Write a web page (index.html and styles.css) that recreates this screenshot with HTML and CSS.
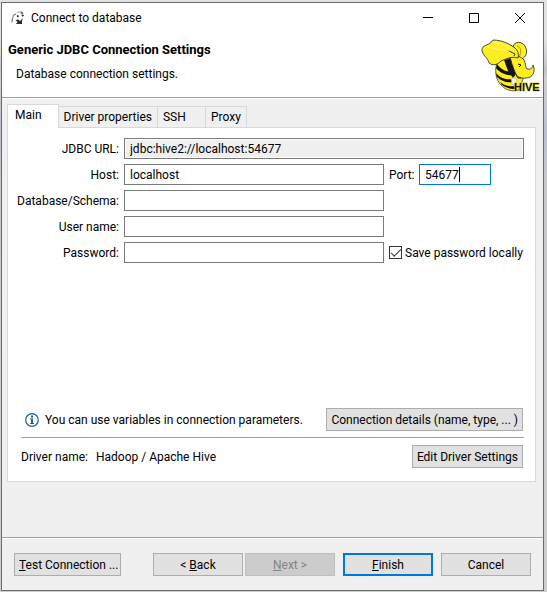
FILE: index.html
```html
<!DOCTYPE html>
<html lang="en">
<head>
<meta charset="utf-8">
<title>Connect to database</title>
<link rel="stylesheet" href="styles.css">
</head>
<body>
<main class="window">
  <div class="titlebar">
    <svg class="app-icon" width="16" height="16" viewBox="0 0 16 16" aria-hidden="true">
      <path d="M2 12.500C2 9 3 6.500 4 5M3.500 5L6 4" fill="none" stroke="#6f625e"/>
      <path d="M7 2.500L9 2L12 1.500" fill="none" stroke="#b0a5a1"/>
      <path d="M10.500 2.500L12.500 2L13.500 3.500L12 4L10.500 3.500Z" fill="#6a5a55"/>
      <path d="M5.500 10L8 9.500L10 11L13 8L12 11L12 14H6L7.500 12Z" fill="#382a28"/>
      <path d="M7 6.500L8.500 6M12 5L13.500 6" stroke="#382a28" stroke-width="2"/>
    </svg>
    <span class="caption">Connect to database</span>
    <button class="winbtn" aria-label="Minimize"><svg width="10" height="10"><path d="M0 4.500H10" stroke="#000"/></svg></button>
    <button class="winbtn" aria-label="Maximize"><svg width="10" height="10"><path d="M.5 .5H9.500V9.500H.5Z" fill="none" stroke="#000"/></svg></button>
    <button class="winbtn" aria-label="Close"><svg width="10" height="10"><path d="M0 0L10 10M10 0L0 10" stroke="#000"/></svg></button>
  </div>
  <header class="header">
    <div>
      <h1>Generic JDBC Connection Settings</h1>
      <p>Database connection settings.</p>
    </div>
    <svg class="logo" width="60" height="56" viewBox="0 0 60 56" role="img" aria-label="Hive">
      <path d="M17 22C13 29 14 41 21 47C25 51 31 53 38 51L42 40L29 19Z" fill="#fdee21" stroke="#222" stroke-width=".7"/>
      <path d="M16 25C20 31 26 33 32 33L33 36C26 37 19 34 15 29ZM15 34C20 40 26 41 32 40L31 43C26 44 20 42 16 38ZM19 43C24 47 29 48 34 47L34 50C28 50 24 48 21 46Z" fill="#111"/>
      <path d="M23 21L33 19L32 27L35 35L32 39L27 32Z" fill="#151515"/>
      <path d="M32 8C33 2 41 2 44 7C48 14 44 20 38 21L33 17Z" fill="#fdee21" stroke="#222" stroke-width=".8"/>
      <path d="M36 7C40 8 41 13 38 18" fill="none" stroke="#a79b15"/>
      <path d="M29 18C33 16 40 17 43 21C45 24 44 28 46 30C49 31 52 29 52 26C55 32 52 39 45 39C40 40 36 38 34 33L31 25Z" fill="#fdee21" stroke="#222" stroke-width=".8"/>
      <path d="M1 12C0 5 9 7 12 1C21 1 29 5 34 9C37 12 38 15 37 19C30 17 25 20 20 22C16 26 12 27 8 24C7 19 3 18 1 12Z" fill="#fdee21" stroke="#222" stroke-width=".8"/>
      <path d="M7 8C15 10 24 10 34 16M12 3C20 4 28 8 33 13" fill="none" stroke="#fff79a"/>
      <path d="M28 12L34 15L33 17" fill="none" stroke="#333"/>
      <path d="M37 25L40 26L38 28M35 36L37 39L40 39" fill="none" stroke="#111"/>
      <path d="M30 40L34 38L36 42L34 48L31 45Z" fill="#eee" stroke="#999" stroke-width=".5"/>
      <text class="logo-text" x="33" y="52">HIVE</text>
    </svg>
  </header>
  <div class="content">
    <div class="tabs" role="tablist">
      <button class="tab active" role="tab" aria-selected="true">Main</button>
      <button class="tab" role="tab">Driver properties</button>
      <button class="tab wide" role="tab">SSH</button>
      <button class="tab" role="tab">Proxy</button>
    </div>
    <section class="panel" role="tabpanel">
      <form class="form">
        <label for="url">JDBC URL:</label>
        <input class="field full readonly" id="url" value="jdbc:hive2://localhost:54677" readonly>
        <label for="host">Host:</label>
        <input class="field" id="host" value="localhost">
        <div class="side">
          <label for="port">Port:</label>
          <span class="port"><input class="field focused" id="port" value="54677"><i class="caret"></i></span>
        </div>
        <label for="db">Database/Schema:</label>
        <input class="field start" id="db">
        <label for="user">User name:</label>
        <input class="field start" id="user">
        <label for="pass">Password:</label>
        <input class="field" id="pass" type="password">
        <label class="check"><input type="checkbox" checked>Save password locally</label>
      </form>
      <div class="info">
        <svg width="14" height="14" viewBox="0 0 14 14" aria-hidden="true">
          <circle cx="7" cy="7" r="6.300" fill="#fff" stroke="#22609c" stroke-width="1.200"/>
          <path d="M6 2.500H8V4.500H6ZM5 5.500H8V10H9V11H5V10H6V6.500H5Z" fill="#22609c"/>
        </svg>
        <span>You can use variables in connection parameters.</span>
        <button class="btn">Connection details (name, type, ... )</button>
      </div>
      <div class="driver">
        <span>Driver name:</span><span>Hadoop / Apache Hive</span>
        <button class="btn">Edit Driver Settings</button>
      </div>
    </section>
  </div>
  <footer class="footer">
    <button class="btn test"><u>T</u>est Connection ...</button>
    <div class="pair">
      <button class="btn nav">&lt; <u>B</u>ack</button>
      <button class="btn nav" disabled><u>N</u>ext &gt;</button>
    </div>
    <button class="btn nav default"><u>F</u>inish</button>
    <button class="btn nav">Cancel</button>
  </footer>
</main>
</body>
</html>
```
FILE: styles.css
```css
* { box-sizing: border-box; }
body {
  margin: 0;
  min-height: 100vh;
  padding: 2px 3px 1px 1px;
  display: flex;
  background: linear-gradient(#e2e2e2 0 40px, #c4c4c8 70px, #d0d0d0 80px, #bcc0d0 130px, #c8c8cc 180px, #cfcfcf);
  color: #000;
  font: 12px/16px Roboto, "Open Sans", sans-serif;
}
button, input { font: inherit; color: inherit; margin: 0; }
.window {
  flex: 1;
  min-width: 0;
  display: flex;
  flex-direction: column;
  border: 1px solid #6b6b6b;
  background: #f0f0f0;
}
.titlebar { display: flex; align-items: center; height: 30px; padding-left: 8px; background: #fff; }
.caption { flex: 1; margin-left: 5px; }
.winbtn { width: 46px; height: 30px; padding: 0; border: 0; background: none; display: grid; place-items: center; }
.header {
  display: flex;
  justify-content: space-between;
  height: 65px;
  padding: 6px 2px 0 6px;
  background: #fff;
  border-bottom: 1px solid #a0a0a0;
}
h1 { margin: 3px 0 8px; font-size: 13px; line-height: 16px; }
p { margin: 0 0 0 8px; }
.logo-text { font: 700 11px "Liberation Sans", sans-serif; fill: #111; stroke: #e8d91e; stroke-width: 1px; paint-order: stroke; }
.content { flex: 1; display: flex; flex-direction: column; padding: 5px 7px 55px 5px; border-top: 1px solid #fff; }
.tabs { display: flex; align-items: flex-end; }
.tab {
  height: 21px;
  padding: 0 5px;
  border: 1px solid #d9d9d9;
  border-left-width: 0;
  border-bottom-width: 0;
  background: #f0f0f0;
  white-space: nowrap;
}
.tab.wide { width: 48px; text-align: left; }
.tab.active {
  height: 24px;
  margin-bottom: -1px;
  padding: 0 16px 3px 7px;
  border-left-width: 1px;
  background: #fff;
  z-index: 1;
}
.panel {
  flex: 1;
  display: flex;
  flex-direction: column;
  padding: 10px 11px 13px 13px;
  border: 1px solid #d9d9d9;
  background: #fff;
}
.form {
  display: grid;
  grid-template-columns: 102px minmax(0, 1fr) 135px;
  gap: 5px;
  align-items: center;
  margin-left: -4px;
}
.form > label:not(.check) { text-align: right; white-space: nowrap; }
.field { width: 100%; min-width: 0; height: 21px; padding: 0 5px; border: 1px solid #7a7a7a; background: #fff; outline: 0; }
.full { grid-column: 2 / 4; }
.start { grid-column: 2; }
.start + label { grid-column: 1; }
.readonly { background: #f0f0f0; box-shadow: inset 0 0 0 1px #fff; }
.side { display: flex; align-items: center; gap: 4px; }
.side label { width: 26px; }
.port { position: relative; width: 72px; }
.port .field { display: block; }
.port .focused { border-color: #0078d7; }
.caret { position: absolute; left: 40px; top: 3px; width: 1px; height: 15px; background: #000; }
.check { display: flex; align-items: center; gap: 3px; white-space: nowrap; }
.check input {
  appearance: none;
  width: 13px;
  height: 13px;
  border: 1px solid #333;
  background: #fff;
  display: grid;
  place-items: center;
}
.check input::before { content: ""; width: 9px; height: 4px; border: solid #333; border-width: 0 0 1px 1px; transform: translateY(-1px) rotate(-45deg); }
.info {
  display: flex;
  align-items: center;
  margin-top: auto;
  padding: 0 1px 6px 4px;
  border-bottom: 1px solid #a0a0a0;
}
.info span { flex: 1; margin-left: 6px; white-space: nowrap; }
.driver { display: flex; align-items: center; gap: 8px; padding: 7px 1px 0 0; }
.driver .btn { margin-left: auto; }
.btn { height: 23px; padding: 0 4px; border: 1px solid #adadad; background: #e1e1e1; white-space: nowrap; }
.btn:disabled { background: #ccc; border-color: #bfbfbf; color: #838383; }
.btn.default { border: 2px solid #0078d7; }
.footer { display: flex; gap: 8px; padding: 15px 12px 14px 12px; border-top: 1px solid #a0a0a0; box-shadow: inset 0 1px #fff; }
.test { margin-right: auto; width: 107px; }
.nav { width: 90px; }
.pair { display: flex; gap: 2px; }
```
